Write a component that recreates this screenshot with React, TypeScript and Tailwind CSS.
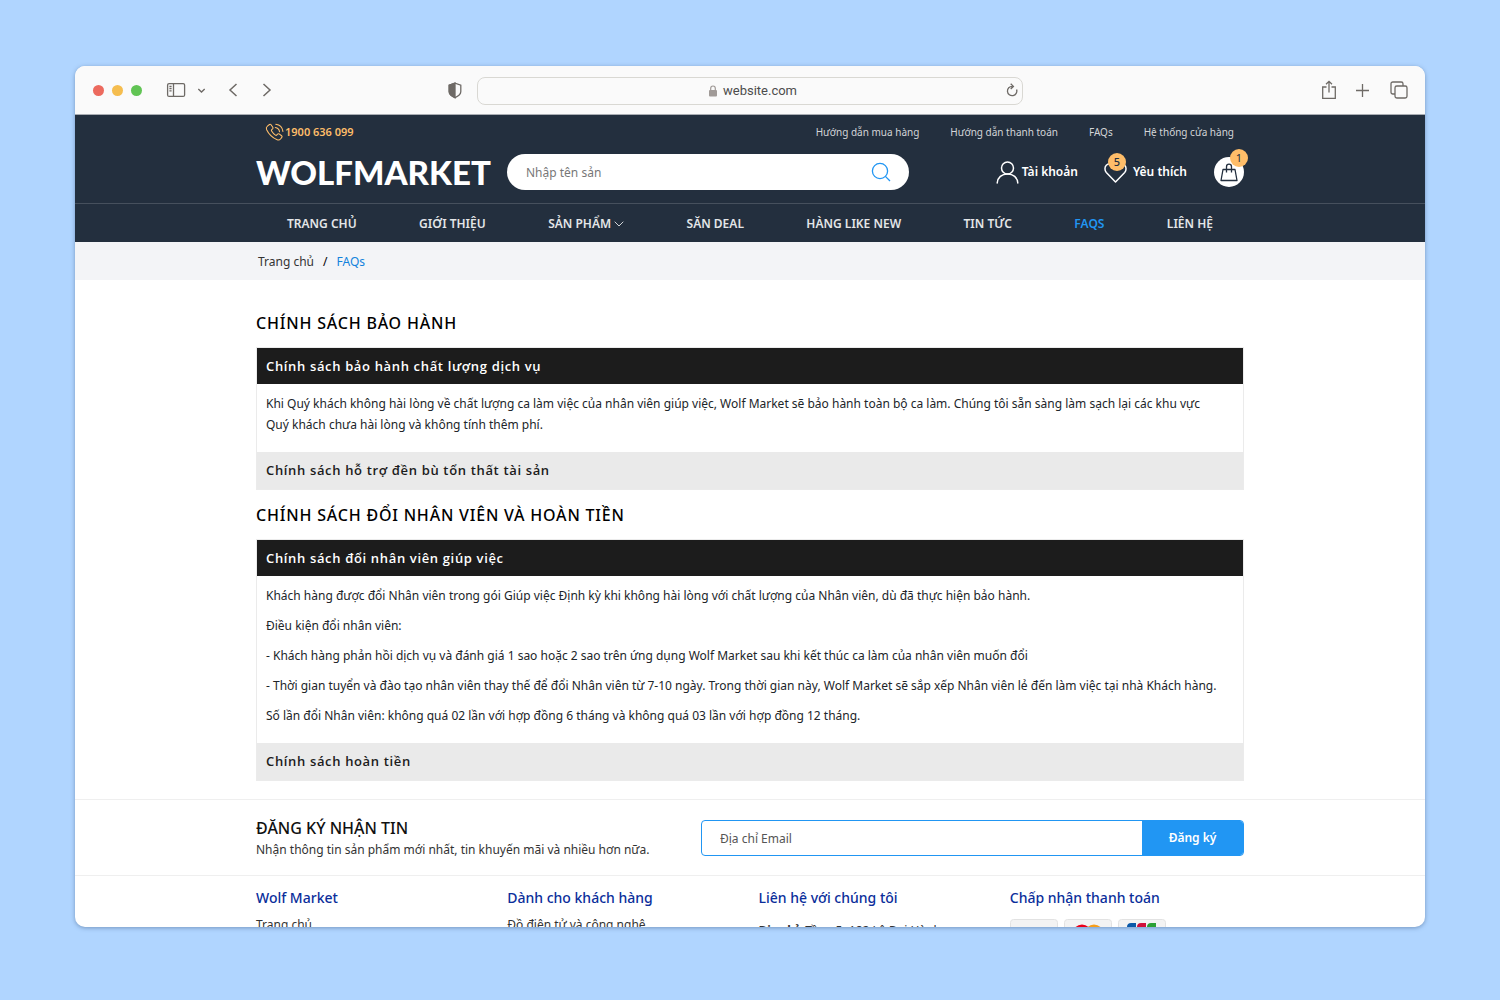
import { FormEvent, useState } from "react"

const topLinks = ["Hướng dẫn mua hàng", "Hướng dẫn thanh toán", "FAQs", "Hệ thống cửa hàng"]
const navLinks = ["Trang chủ", "Giới thiệu", "Sản phẩm", "Săn deal", "Hàng like new", "Tin tức", "FAQs", "Liên hệ"]

const warranty = [
    {
        title: "Chính sách bảo hành chất lượng dịch vụ",
        body: [
            "Khi Quý khách không hài lòng về chất lượng ca làm việc của nhân viên giúp việc, Wolf Market sẽ bảo hành toàn bộ ca làm. Chúng tôi sẵn sàng làm sạch lại các khu vực Quý khách chưa hài lòng và không tính thêm phí.",
        ],
    },
    {
        title: "Chính sách hỗ trợ đền bù tổn thất tài sản",
        body: ["Wolf Market hỗ trợ đền bù khi có tổn thất tài sản trong ca làm."],
    },
]

const refund = [
    {
        title: "Chính sách đổi nhân viên giúp việc",
        body: [
            "Khách hàng được đổi Nhân viên trong gói Giúp việc Định kỳ khi không hài lòng với chất lượng của Nhân viên, dù đã thực hiện bảo hành.",
            "Điều kiện đổi nhân viên:",
            "- Khách hàng phản hồi dịch vụ và đánh giá 1 sao hoặc 2 sao trên ứng dụng Wolf Market sau khi kết thúc ca làm của nhân viên muốn đổi",
            "- Thời gian tuyển và đào tạo nhân viên thay thế để đổi Nhân viên từ 7-10 ngày. Trong thời gian này, Wolf Market sẽ sắp xếp Nhân viên lẻ đến làm việc tại nhà Khách hàng.",
            "Số lần đổi Nhân viên: không quá 02 lần với hợp đồng 6 tháng và không quá 03 lần với hợp đồng 12 tháng.",
        ],
    },
    {
        title: "Chính sách hoàn tiền",
        body: ["Khách hàng được hoàn tiền theo hợp đồng đã ký."],
    },
]

const BrowserBar = () => (
    <div className="grid grid-cols-[1fr_546px_1fr] items-center h-[49px] shrink-0 bg-[#fafafa] border-b border-[#a9adb3] text-[#6e6a66]">
        <div className="flex items-center pl-[18px] pr-[15px]">
            <div className="flex gap-2">
                <span className="size-[11px] rounded-full bg-[#ec6a5e]"></span>
                <span className="size-[11px] rounded-full bg-[#f5bd4f]"></span>
                <span className="size-[11px] rounded-full bg-[#61c454]"></span>
            </div>
            <button type="button" aria-label="Sidebar" className="ml-6">
                <svg width="20" height="16" viewBox="0 0 20 16" fill="none" stroke="currentColor" strokeWidth="1.3">
                    <rect x="1.6" y="1.6" width="17" height="12.8" rx="1.5" />
                    <path d="M7.5 1.6v12.8M3.4 4.5h2.2M3.4 6.7h2.2M3.4 8.9h2.2" />
                </svg>
            </button>
            <button type="button" aria-label="Tab groups" className="ml-[11px]">
                <svg width="9" height="7" viewBox="0 0 9 7" fill="none" stroke="currentColor" strokeWidth="1.4">
                    <path d="M1.3 2l3.2 3 3.2-3" />
                </svg>
            </button>
            <button type="button" aria-label="Back" className="ml-[21px]">
                <svg width="12" height="16" viewBox="0 0 12 16" fill="none" stroke="currentColor" strokeWidth="1.5">
                    <path d="M9.5 2L3 8l6.500 6" />
                </svg>
            </button>
            <button type="button" aria-label="Forward" className="ml-[22px]">
                <svg width="12" height="16" viewBox="0 0 12 16" fill="none" stroke="currentColor" strokeWidth="1.5">
                    <path d="M2.500 2L9 8l-6.500 6" />
                </svg>
            </button>
            <svg className="ml-auto" width="14" height="17" viewBox="0 0 14 17" fill="none" stroke="currentColor" strokeWidth="1.3">
                <path d="M7 1.200L1.200 3.200v6.300c0 2.800 2.600 4.700 5.800 6.200 3.200-1.500 5.800-3.400 5.800-6.200V3.200z" />
                <path d="M7 1.200L1.200 3.200v6.300c0 2.800 2.600 4.700 5.800 6.200z" fill="currentColor" />
            </svg>
        </div>
        <div className="flex items-center h-7 mt-px border border-[#d9d8d3] rounded-lg px-1 text-[#4c4c4c]">
            <div className="flex flex-1 items-center justify-center gap-[6px] pl-[18px]">
                <svg width="8" height="12" viewBox="0 0 8 12" fill="none">
                    <rect y="5" width="8" height="6.500" rx="1" fill="#a09a97" />
                    <path d="M1.700 5.500V3.300a2.300 2.300 0 0 1 4.600 0v2.200" stroke="#a09a97" strokeWidth="1.200" />
                </svg>
                <span className="font-['Roboto',sans-serif] text-[13px]">website.com</span>
            </div>
            <button type="button" aria-label="Reload" className="text-[#6e6a66]">
                <svg width="12" height="15" viewBox="0 0 12 15" fill="none" stroke="currentColor" strokeWidth="1.300">
                    <path d="M10.600 6.500a4.700 4.700 0 1 1-4.300-3.200M4.700 .8l2.700 2.600-2.700 2.500" />
                </svg>
            </button>
        </div>
        <div className="flex items-center justify-end gap-[18px] pr-[17px]">
            <button type="button" aria-label="Share">
                <svg width="16" height="20" viewBox="0 0 16 20" fill="none" stroke="currentColor" strokeWidth="1.300">
                    <path d="M5.500 7H1.700v11.300h12.600V7h-3.800M8 12.500V1.500M5 4.300l3-3 3 3" />
                </svg>
            </button>
            <button type="button" aria-label="New tab" className="mr-[2px]">
                <svg width="15" height="15" viewBox="0 0 15 15" stroke="currentColor" strokeWidth="1.300">
                    <path d="M7.500 1v13M1 7.500h13" />
                </svg>
            </button>
            <button type="button" aria-label="Tabs">
                <svg width="18" height="18" viewBox="0 0 18 18" fill="none" stroke="currentColor" strokeWidth="1.300">
                    <rect x="5" y="5" width="12" height="12" rx="1.800" />
                    <path d="M5 13H2.800A1.800 1.800 0 0 1 1 11.200V2.800A1.800 1.800 0 0 1 2.800 1h8.400a1.800 1.800 0 0 1 1.800 1.800V5" />
                </svg>
            </button>
        </div>
    </div>
)

const Header = () => {

    const [ search, setSearch ] = useState<string>("")

    return (
        <header className="bg-[#232f3e] text-white">
            <div className="mx-auto max-w-[988px]">
                <div className="flex items-center justify-between h-[34px] pl-[9px] pr-[10px]">
                    <a href="#" className="flex items-center gap-px text-[11px] font-semibold text-[#febd69]">
                        <svg width="19" height="19" viewBox="0 0 19 19" fill="none" stroke="currentColor" strokeWidth="1.100" strokeLinecap="round" strokeLinejoin="round">
                            <path d="M2.700 2.900L4.500 1.500c.5-.4 1.100-.3 1.500.2l1.800 2.600c.3.500.2 1.100-.2 1.500l-.9.800c-.4.400-.4.900-.1 1.400 1 1.700 2.200 3 3.800 4.100.5.300 1 .3 1.400-.1l.8-.9c.4-.4 1-.5 1.500-.2l2.500 1.900c.5.400.6 1 .2 1.500l-1.300 1.700c-.9 1-2.100 1.200-3.300.7C7.700 14.800 3.700 11 1.500 6.400 1 5.100 1.500 3.800 2.700 2.900z" />
                            <path d="M10.300 4.500c2.300.3 3.900 1.900 4.200 4.200M10.800 1.200c4 .5 6.600 3.200 7.100 7.200" />
                        </svg>
                        1900 636 099
                    </a>
                    <div className="flex gap-[31px] text-[10px] text-[#d3d5d8]">
                        {topLinks.map((link) => <a key={link} href="#">{link}</a>)}
                    </div>
                </div>
                <div className="flex items-center h-[46px]">
                    <a href="#" className="w-[251px] shrink-0 font-['Lato',sans-serif] text-[33px] leading-[36px] font-black">WOLFMARKET</a>
                    <form className="flex items-center w-[402px] h-9 rounded-full bg-white pl-[19px] pr-[18px]" onSubmit={(e: FormEvent) => e.preventDefault()}>
                        <input type="text" name="search" aria-label="Nhập tên sản" placeholder="Nhập tên sản" className="flex-1 min-w-0 pt-px text-[12px] text-[#222] placeholder:text-[#777] outline-none" value={search} onChange={(e) => setSearch(e.target.value)} />
                        <button type="submit" aria-label="Tìm kiếm" className="text-[#2196f3]">
                            <svg width="20" height="20" viewBox="0 0 20 20" fill="none" stroke="currentColor" strokeWidth="1.300">
                                <circle cx="9" cy="9" r="7.600" />
                                <path d="M14.400 14.400l4.600 4.600" />
                            </svg>
                        </button>
                    </form>
                    <div className="flex items-center justify-end flex-1 text-[12px] font-semibold">
                        <a href="#" className="flex items-center gap-[3px]">
                            <svg width="23" height="24" viewBox="0 0 23 24" fill="none" stroke="currentColor" strokeWidth="1.500" strokeLinecap="round">
                                <circle cx="11.500" cy="8" r="6" />
                                <path d="M1.200 23c.4-5.500 4.500-9 10.300-9S21.400 17.500 21.800 23" />
                            </svg>
                            Tài khoản
                        </a>
                        <a href="#" className="relative flex items-center gap-[6px] ml-[26px]">
                            <svg width="23" height="22" viewBox="0 0 23 22" fill="none" stroke="currentColor" strokeWidth="1.500" strokeLinejoin="round">
                                <path d="M11.500 21L2.300 11.500C.5 9.400.5 6 2.300 4.200s5-2 7.200 0l2 2 2-2c2.200-2 5.400-1.800 7.200 0s1.800 5.200 0 7.300z" />
                            </svg>
                            <span className="absolute -top-2 left-1 size-[18px] rounded-full bg-[#febd69] text-[11px] leading-[18px] text-center font-medium text-[#232f3e]">5</span>
                            Yêu thích
                        </a>
                        <a href="#" aria-label="Giỏ hàng" className="relative flex items-center justify-center size-[30px] ml-[27px] rounded-full bg-white text-[#232f3e]">
                            <svg width="18" height="19" viewBox="0 0 18 19" fill="none" stroke="currentColor" strokeWidth="1.300" strokeLinejoin="round">
                                <path d="M3 6.500h12l2 11H1z" />
                                <path d="M6.500 9.500V3.700a2.500 2.500 0 0 1 5 0v5.800" />
                            </svg>
                            <span className="absolute -top-2 -right-1 size-[18px] rounded-full bg-[#febd69] text-[11px] leading-[18px] text-center font-normal">1</span>
                        </a>
                    </div>
                </div>
            </div>
            <nav className="mt-2 border-t border-[#46505d]">
                <div className="mx-auto max-w-[988px] flex items-center justify-between h-[38px] pt-px px-[31px] text-[12px] font-semibold uppercase text-[#e4e6e8]">
                    {navLinks.map((link) => (
                        <a key={link} href="#" className={link === "FAQs" ? "text-[#2196f3]" : "flex items-center gap-[3px]"}>
                            {link}
                            {link === "Sản phẩm" && (
                                <svg width="10" height="6" viewBox="0 0 10 6" fill="none" stroke="currentColor" strokeWidth="0.900">
                                    <path d="M.7.700L5 5 9.300.700" />
                                </svg>
                            )}
                        </a>
                    ))}
                </div>
            </nav>
        </header>
    )
}

type Item = { title: string, body: string[] }

const Accordion = ({ heading, items }: { heading: string, items: Item[] }) => {

    const [ active, setActive ] = useState<number>(0)

    return (
        <section>
            <h2 className="pt-[2px] text-base leading-[47px] font-medium tracking-wider uppercase text-black">{heading}</h2>
            <div className="border border-[#ebebeb]">
                {items.map((item, index) => (
                    <div key={item.title}>
                        <button type="button" aria-expanded={active === index} className={`block w-full px-[9px] pt-px text-left font-['Open_Sans',sans-serif] text-[13px] font-semibold tracking-wider ${active === index ? "h-9 bg-[#1c1c1c] text-white" : "h-[37px] bg-[#eaeaea] text-[#1c1c1c]"}`} onClick={() => setActive(index)}>{item.title}</button>
                        {active === index && (
                            <div className="pl-[9px] pr-6 pt-[9px] pb-[8px] text-[12px] leading-[21px] text-[#212529]">
                                {item.body.map((text) => <p key={text} className="mb-[9px]">{text}</p>)}
                            </div>
                        )}
                    </div>
                ))}
            </div>
        </section>
    )
}

const Newsletter = () => {

    const [ email, setEmail ] = useState<string>("")

    return (
        <div className="border-y border-[#efefef]">
            <div className="mx-auto max-w-[988px] flex items-center justify-between h-[75px]">
                <div>
                    <h3 className="text-base leading-6 font-medium uppercase text-[#111]">Đăng ký nhận tin</h3>
                    <p className="text-[12px] leading-5 text-[#333]">Nhận thông tin sản phẩm mới nhất, tin khuyến mãi và nhiều hơn nữa.</p>
                </div>
                <form className="flex w-[543px] h-9 overflow-hidden rounded border border-[#2196f3]" onSubmit={(e: FormEvent) => e.preventDefault()}>
                    <input type="email" name="email" aria-label="Địa chỉ Email" placeholder="Địa chỉ Email" className="flex-1 min-w-0 pt-[2px] px-[18px] text-[12px] placeholder:text-[#555] outline-none" value={email} onChange={(e) => setEmail(e.target.value)} />
                    <button type="submit" className="w-[101px] pt-px bg-[#2196f3] text-[12px] font-semibold text-white">Đăng ký</button>
                </form>
            </div>
        </div>
    )
}

const Footer = () => (
    <footer className="mx-auto max-w-[988px] grid grid-cols-4 gap-[17px] pt-[10px] text-[12px] leading-5 text-[#333] whitespace-nowrap">
        <div>
            <h4 className="mb-[5px] text-[14px] leading-6 font-medium text-[#0b2e9b]">Wolf Market</h4>
            <a href="#">Trang chủ</a>
        </div>
        <div>
            <h4 className="mb-[5px] text-[14px] leading-6 font-medium text-[#0b2e9b]">Dành cho khách hàng</h4>
            <a href="#">Đồ điện tử và công nghệ</a>
        </div>
        <div>
            <h4 className="mb-[11px] text-[14px] leading-6 font-medium text-[#0b2e9b]">Liên hệ với chúng tôi</h4>
            <p><b>Địa chỉ:</b> Tầng 5, 182 Lê Đại Hành</p>
        </div>
        <div>
            <h4 className="mb-[9px] text-[14px] leading-6 font-medium text-[#0b2e9b]">Chấp nhận thanh toán</h4>
            <div className="flex gap-[6px]">
                <svg width="48" height="30" viewBox="0 0 48 30">
                    <rect x=".5" y=".5" width="47" height="29" rx="3" fill="#f3f3f3" stroke="#e2e2e2" />
                </svg>
                <svg width="48" height="30" viewBox="0 0 48 30">
                    <rect x=".5" y=".5" width="47" height="29" rx="3" fill="#f3f3f3" stroke="#e2e2e2" />
                    <circle cx="18" cy="15" r="9.500" fill="#eb001b" />
                    <circle cx="30" cy="15" r="9.500" fill="#f79e1b" />
                </svg>
                <svg width="48" height="30" viewBox="0 0 48 30">
                    <rect x=".5" y=".5" width="47" height="29" rx="3" fill="#f3f3f3" stroke="#e2e2e2" />
                    <path d="M9 26V8c0-2.500 1.500-4 4-4h5v18c0 2.500-1.500 4-4 4z" fill="#0b59a8" />
                    <path d="M19 26V8c0-2.500 1.500-4 4-4h5v18c0 2.500-1.500 4-4 4z" fill="#d0103a" />
                    <path d="M29 26V8c0-2.500 1.500-4 4-4h5v18c0 2.500-1.500 4-4 4z" fill="#2ba135" />
                </svg>
            </div>
        </div>
    </footer>
)

const App = () => {
    return (
        <div className="flex h-screen bg-[#b0d5ff] px-[75px] pt-[66px] pb-[73px] font-['Noto_Sans','Open_Sans',sans-serif]">
            <div className="flex flex-col flex-1 min-w-0 overflow-hidden rounded-[10px] bg-white shadow-[0_1px_4px_rgba(60,90,130,0.5)]">
                <BrowserBar />
                <div className="flex-1 min-h-0 overflow-hidden">
                    <Header />
                    <div className="bg-[#f3f4f7]">
                        <div className="mx-auto max-w-[988px] flex items-center gap-[9px] h-[38px] pt-[2px] px-[2px] text-[12px] text-[#333]">
                            <a href="#">Trang chủ</a>
                            <span className="text-black">/</span>
                            <a href="#" className="text-[#1282dc]">FAQs</a>
                        </div>
                    </div>
                    <main className="mx-auto max-w-[988px] pt-[18px] pb-[18px]">
                        <Accordion heading="Chính sách bảo hành" items={warranty} />
                        <Accordion heading="Chính sách đổi nhân viên và hoàn tiền" items={refund} />
                    </main>
                    <Newsletter />
                    <Footer />
                </div>
            </div>
        </div>
    )
}

export default App
